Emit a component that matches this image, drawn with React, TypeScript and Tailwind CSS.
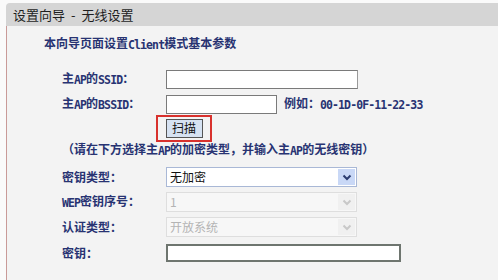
import React from "react";

const Mixed = ({ text }: { text: string }) => {
  const parts = text.split(/([\x21-\x7E]+)/);
  return (
    <>
      {parts.map((p, i) =>
        /^[\x21-\x7E]+$/.test(p) ? (
          <span key={i} className="relative top-[1px] font-['DejaVu_Sans_Mono',monospace] text-[11.5px] tracking-[-0.9px]">
            {p}
          </span>
        ) : (
          <span key={i}>{p}</span>
        )
      )}
    </>
  );
};

const Chevron = ({ color }: { color: string }) => (
  <svg width="10" height="7" viewBox="0 0 10 7">
    <polyline points="1.5,1.5 5,5 8.5,1.5" fill="none" stroke={color} strokeWidth="2" />
  </svg>
);

const Select = ({ value, disabled }: { value: string; disabled?: boolean }) => (
  <div
    className={
      "flex h-[20px] w-[191px] items-center justify-between border " +
      (disabled ? "border-[#dedede] bg-[#f7f7f7]" : "border-[#a9b8d6] bg-white")
    }
  >
    <span className={"pl-[3px] text-[12px] leading-none " + (disabled ? "text-[#b4b4b4]" : "text-[#111]")}>
      {value}
    </span>
    <div
      className={
        "mr-[1px] flex h-[16px] w-[17px] items-center justify-center " +
        (disabled ? "bg-[#f0f0f0]" : "bg-[#c9d8f6]")
      }
    >
      <Chevron color={disabled ? "#c8c8c8" : "#2c3c70"} />
    </div>
  </div>
);

const Label = ({ text }: { text: string }) => (
  <div className="w-[104px] shrink-0 text-[12px] font-bold leading-none text-[#283372]">
    <Mixed text={text} />
  </div>
);

export default function App() {
  return (
    <div className="flex h-[280px] w-[498px] flex-col overflow-hidden bg-[#fafafa] pl-[6px] pt-[3px] font-['Noto_Sans_CJK_SC',sans-serif]">
      <div className="flex h-[23px] shrink-0 items-center rounded-tl-[4px] bg-[#d5d5d5] pl-[7px] text-[13px] leading-none text-[#1e1e1e]">
        <span>设置向导</span>
        <span className="mx-[6px]">-</span>
        <span>无线设置</span>
      </div>
      <div className="flex flex-1 flex-col border-l border-[#c99a98] bg-[#f3f3f3] pl-[55px]">
        <div className="ml-[-18px] mt-[8px] flex h-[20px] items-center text-[12px] font-bold leading-none text-[#283372]">
          <span>
            <Mixed text="本向导页面设置Client模式基本参数" />
          </span>
        </div>

        <div className="mt-[15px] flex h-[20px] items-center">
          <Label text="主AP的SSID：" />
          <div className="h-[19px] w-[192px] border border-[#7a7a7a] border-r-[#9a9a9a] bg-white" />
        </div>

        <div className="mt-[5px] flex h-[20px] items-center">
          <Label text="主AP的BSSID：" />
          <div className="h-[19px] w-[111px] border border-[#7a7a7a] bg-white" />
          <div className="ml-[7px] text-[12px] font-bold leading-none text-[#283372]">
            <Mixed text="例如：00-1D-0F-11-22-33" />
          </div>
        </div>

        <div className="flex h-[28px] items-center">
          <div className="w-[94px] shrink-0" />
          <div className="flex h-[27px] w-[56px] items-center justify-center border-2 border-[#d8312d]">
            <div className="flex h-[19px] w-[37px] items-center justify-center border border-[#555] bg-[#d6e2f2] text-[12px] leading-none text-[#111]">
              扫描
            </div>
          </div>
        </div>

        <div className="flex h-[16px] items-center text-[12px] font-bold leading-none text-[#283372]">
          <span>
            <Mixed text="（请在下方选择主AP的加密类型，并输入主AP的无线密钥）" />
          </span>
        </div>

        <div className="mt-[9px] flex h-[20px] items-center">
          <Label text="密钥类型：" />
          <Select value="无加密" />
        </div>

        <div className="mt-[5px] flex h-[20px] items-center">
          <Label text="WEP密钥序号：" />
          <Select value="1" disabled />
        </div>

        <div className="mt-[5px] flex h-[20px] items-center">
          <Label text="认证类型：" />
          <Select value="开放系统" disabled />
        </div>

        <div className="mt-[6px] flex h-[20px] items-center">
          <Label text="密钥：" />
          <div className="h-[18px] w-[235px] border-2 border-[#6e756f] bg-white" />
        </div>
      </div>
    </div>
  );
}
